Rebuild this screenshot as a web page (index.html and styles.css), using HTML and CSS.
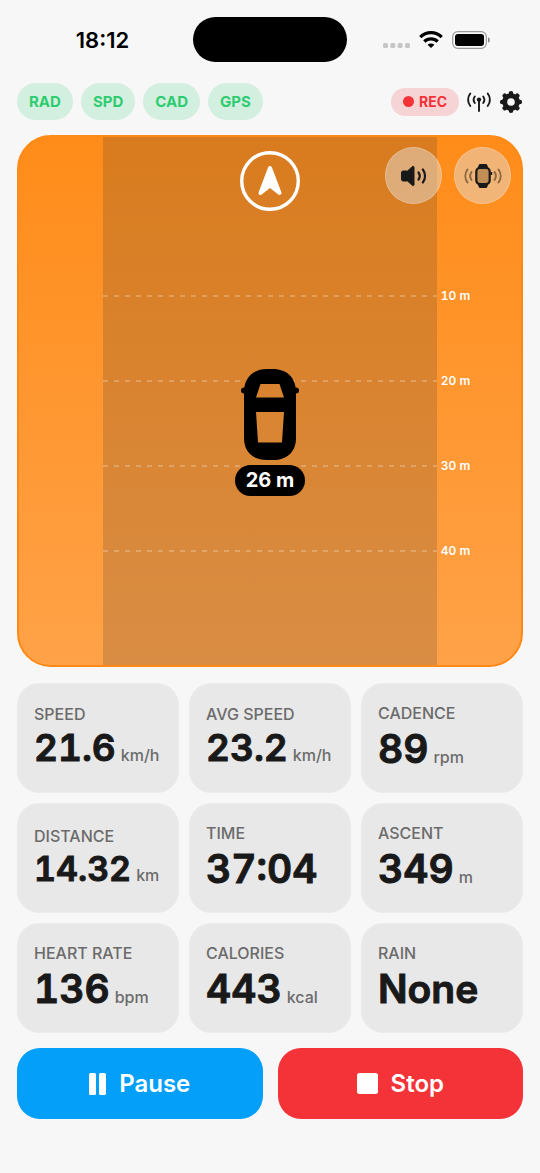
FILE: index.html
```html
<!DOCTYPE html>
<html lang="en">
<head>
<meta charset="utf-8">
<meta name="viewport" content="width=device-width, initial-scale=1">
<title>Ride</title>
<link rel="stylesheet" href="styles.css">
</head>
<body>
<div class="screen">
  <header class="status">
    <time class="clock">18:12</time>
    <div class="island"></div>
    <div class="system">
      <svg width="27" height="6" viewBox="0 0 27 6" fill="#c6c6c6"><rect y="1" width="5" height="5" rx="1.5"/><rect x="7.300" y="1" width="5" height="5" rx="1.500"/><rect x="14.600" y="1" width="5" height="5" rx="1.500"/><rect x="22" y="1" width="5" height="5" rx="1.500"/></svg>
      <svg class="wifi" width="24" height="17" viewBox="0 0 24 17" fill="none" stroke="#000" stroke-width="3.300"><path d="M1.300 6.100a15.200 15.200 0 0 1 21.400 0"/><path d="M5.300 10.500a9.600 9.600 0 0 1 13.400 0"/><path d="M12 17 8.600 13.800a4.900 4.900 0 0 1 6.800 0z" fill="#000" stroke="none"/></svg>
      <svg width="38" height="18" viewBox="0 0 38 18"><rect x=".7" y=".7" width="33.600" height="16.600" rx="5" fill="none" stroke="#999" stroke-width="1.200"/><rect x="3" y="3" width="29" height="12" rx="3"/><path d="M36 6.200c2.400.8 2.400 4.800 0 5.600z" fill="#888"/></svg>
    </div>
  </header>

  <div class="toolbar">
    <ul class="sensors"><li>RAD</li><li>SPD</li><li>CAD</li><li>GPS</li></ul>
    <div class="tools">
      <span class="rec"><i class="rec-dot"></i>REC</span>
      <button class="icon-button" aria-label="Sensors">
        <svg width="24" height="20" viewBox="0 0 24 20" fill="none" stroke="#19191a" stroke-width="1.900" stroke-linecap="round"><path d="M12 8v11M7.800 4.500a5.500 5.500 0 0 0 0 6.500M16.200 4.500a5.500 5.500 0 0 1 0 6.500M3.300 1.500a10 10 0 0 0 0 12.500M20.700 1.500a10 10 0 0 1 0 12.500"/><circle cx="12" cy="7.600" r="2.200" fill="#19191a" stroke="none"/></svg>
      </button>
      <button class="icon-button" aria-label="Settings">
        <svg width="24" height="24" viewBox="-12 -12 24 24"><circle r="6.300" fill="none" stroke="#19191a" stroke-width="5"/><g stroke="#19191a" stroke-width="4.600" stroke-linecap="round"><path d="M0-8.800v.4M0 8.800v-.4M-8.800 0h.4M8.800 0h-.4"/><path d="M-6.220-6.220l.3.300M6.220 6.220l-.3-.3M-6.220 6.220l.3-.3M6.220-6.220l-.3.300"/></g></svg>
      </button>
    </div>
  </div>

  <main class="radar">
    <div class="lane"></div>
    <div class="range range-10"><span>10 m</span></div>
    <div class="range range-20"><span>20 m</span></div>
    <div class="range range-30"><span>30 m</span></div>
    <div class="range range-40"><span>40 m</span></div>
    <svg class="rider" width="60" height="60" viewBox="0 0 60 60"><circle cx="30" cy="30" r="28.300" fill="none" stroke="#fff" stroke-width="3.400"/><path d="M30 17 39.500 42 30 34.500 20.500 42z" fill="#fff" stroke="#fff" stroke-width="4" stroke-linejoin="round"/></svg>
    <div class="car">
      <svg width="58" height="92" viewBox="0 0 58 92"><path fill-rule="evenodd" d="M26 0h6C46 0 55 9 55 23v46c0 14-9 22-23 22h-6C12 91 3 83 3 69V23C3 9 12 0 26 0zM19.500 15 15 28.500h28L38.500 15zM15 43l2 30.500h24L43 43z"/><circle cx="3" cy="21.500" r="3"/><circle cx="55" cy="21.500" r="3"/></svg>
      <span class="distance">26 m</span>
    </div>
    <div class="radar-controls">
      <button class="round" aria-label="Sound">
        <svg width="28" height="22" viewBox="0 0 28 22"><path d="M3.500 6h4l4.800-4.300c.8-.7 1.700-.4 1.700.7v17.200c0 1.100-.9 1.400-1.700.7L7.500 16h-4c-1.500 0-2-.5-2-2V8c0-1.500.5-2 2-2z" fill="#19191a" stroke="#19191a" stroke-width="1"/><path d="M18.500 7.500a6 6 0 0 1 0 7M22.800 4.500a10.500 10.500 0 0 1 0 13" fill="none" stroke="#19191a" stroke-width="2.200" stroke-linecap="round"/></svg>
      </button>
      <button class="round" aria-label="Watch alerts">
        <svg width="38" height="26" viewBox="0 0 38 26"><path d="M15.500 1.500h7l1.500 4h-10zM15.500 24.500h7l1.500-4h-10z" fill="#19191a" stroke="#19191a"/><rect x="12.300" y="5" width="13.400" height="16" rx="3.500" fill="#c18e56" stroke="#19191a" stroke-width="2.200"/><path d="M27.400 9v3" stroke="#19191a" stroke-width="1.600"/><path d="M7.500 9a7 7 0 0 0 0 8M3.500 6.500a11 11 0 0 0 0 13M30.500 9a7 7 0 0 1 0 8M34.500 6.500a11 11 0 0 1 0 13" fill="none" stroke="#8b6842" stroke-width="2" stroke-linecap="round"/></svg>
      </button>
    </div>
  </main>

  <section class="metrics">
    <article class="metric"><h2>SPEED</h2><p><b class="medium">21.6</b><small>km/h</small></p></article>
    <article class="metric"><h2>AVG SPEED</h2><p><b class="medium">23.2</b><small>km/h</small></p></article>
    <article class="metric"><h2>CADENCE</h2><p><b>89</b><small>rpm</small></p></article>
    <article class="metric"><h2>DISTANCE</h2><p><b class="compact">14.32</b><small>km</small></p></article>
    <article class="metric"><h2>TIME</h2><p><b>37:04</b></p></article>
    <article class="metric"><h2>ASCENT</h2><p><b>349</b><small>m</small></p></article>
    <article class="metric"><h2>HEART RATE</h2><p><b>136</b><small>bpm</small></p></article>
    <article class="metric"><h2>CALORIES</h2><p><b>443</b><small>kcal</small></p></article>
    <article class="metric"><h2>RAIN</h2><p><b>None</b></p></article>
  </section>

  <footer class="actions">
    <button class="action pause"><svg width="17" height="22" viewBox="0 0 17 22" fill="#fff"><rect width="7" height="22" rx="1.500"/><rect x="10" width="7" height="22" rx="1.500"/></svg>Pause</button>
    <button class="action stop"><svg width="21" height="21" viewBox="0 0 21 21" fill="#fff"><rect width="21" height="21" rx="2.500"/></svg>Stop</button>
  </footer>
</div>
</body>
</html>
```

FILE: styles.css
```css
* { box-sizing: border-box; }
body {
  margin: 0;
  background: #f7f7f7;
  color: #19191a;
  font-family: Inter, Roboto, sans-serif;
}
button { font: inherit; border: 0; padding: 0; color: inherit; cursor: pointer; }
svg { display: block; }
h2, p, ul { margin: 0; padding: 0; }
.screen {
  min-height: 100vh;
  display: flex;
  flex-direction: column;
  padding: 0 17px 54px;
}

.status {
  height: 79px;
  display: grid;
  grid-template-columns: 1fr 154px 1fr;
  align-items: center;
}
.clock { color: #000; font-size: 22px; font-weight: 600; text-align: center; padding-right: 5px; }
.island { height: 45px; border-radius: 23px; background: #000; }
.system { display: flex; align-items: center; justify-content: flex-end; gap: 9px; padding-right: 33px; }
.system svg:first-child { margin-top: 11px; }

.toolbar {
  height: 45px;
  display: flex;
  align-items: center;
  justify-content: space-between;
  margin-bottom: 11px;
}
.sensors { display: flex; gap: 8px; list-style: none; }
.sensors li {
  padding: 0 12px;
  border-radius: 19px;
  background: #d3efdf;
  color: #2ecc71;
  font-size: 15px;
  font-weight: 700;
  line-height: 37px;
}
.tools { display: flex; align-items: center; gap: 8px; }
.rec {
  display: flex;
  align-items: center;
  gap: 5px;
  padding: 0 12px;
  border-radius: 14px;
  background: #f6d4d6;
  color: #f33338;
  font-size: 14px;
  font-weight: 700;
  line-height: 28px;
}
.rec-dot { width: 11px; height: 11px; border-radius: 50%; background: #f33338; }
.icon-button { background: none; }

.radar {
  position: relative;
  flex: 1 0 auto;
  min-height: 480px;
  border: 2px solid #ff8a15;
  border-radius: 34px;
  background: linear-gradient(#ff8c19, #ffa248);
  overflow: hidden;
}
.lane { position: absolute; inset: 0 calc(17% - 1px); background: rgba(51, 51, 51, .19); }
.range {
  position: absolute;
  left: calc(17% - 1px);
  right: calc(17% - 1px);
  height: 2px;
  background: repeating-linear-gradient(90deg, rgba(255, 255, 255, .24) 0 5px, transparent 5px 11px);
}
.range span {
  position: absolute;
  left: 100%;
  top: -7px;
  padding-left: 4px;
  color: #fff;
  font-size: 12px;
  font-weight: 600;
  font-variant-numeric: tabular-nums;
  line-height: 16px;
  white-space: nowrap;
}
.range-10 { top: 29.9%; }
.range-20 { top: 46%; }
.range-30 { top: 62.1%; }
.range-40 { top: 78.2%; }
.rider { position: absolute; top: 14px; left: calc(50% - 30px); }
.car {
  position: absolute;
  top: 44%;
  left: 0;
  right: 0;
  display: flex;
  flex-direction: column;
  align-items: center;
  gap: 4px;
}
.distance {
  padding: 0 11px;
  border-radius: 16px;
  background: #000;
  color: #fff;
  font-size: 20px;
  font-weight: 700;
  line-height: 31px;
}
.radar-controls { position: absolute; top: 10px; right: 10px; display: flex; gap: 12px; }
.round {
  width: 57px;
  height: 57px;
  border: 1px solid rgba(255, 255, 255, .2);
  border-radius: 50%;
  background: rgba(228, 220, 210, .5);
  display: grid;
  place-items: center;
}

.metrics {
  display: grid;
  grid-template-columns: repeat(3, 1fr);
  gap: 10px;
  margin: 16px 0 15px;
}
.metric {
  height: 110px;
  padding: 0 16px 2px;
  border: 1px solid #ebebeb;
  border-radius: 22px;
  background: #e8e8e8;
  display: flex;
  flex-direction: column;
  justify-content: center;
  gap: 2px;
}
.metric h2 { color: #6b6b6b; font-size: 16px; font-weight: 500; line-height: 20px; }
.metric p { display: flex; align-items: baseline; gap: 5px; white-space: nowrap; }
.metric b {
  font-size: 39px;
  font-weight: 600;
  font-variant-numeric: tabular-nums;
  line-height: 47px;
  -webkit-text-stroke: 1px #19191a;
}
.metric .medium { font-size: 37px; line-height: 44px; }
.metric .compact { font-size: 34px; line-height: 41px; }
.metric small { color: #6b6b6b; font-size: 16px; font-weight: 500; }

.actions { display: grid; grid-template-columns: 1fr 1fr; gap: 15px; }
.action {
  height: 71px;
  border-radius: 23px;
  color: #fff;
  font-size: 24px;
  font-weight: 600;
  display: flex;
  align-items: center;
  justify-content: center;
  gap: 13px;
}
.pause { background: #039ff8; }
.stop { background: #f33338; }
```
